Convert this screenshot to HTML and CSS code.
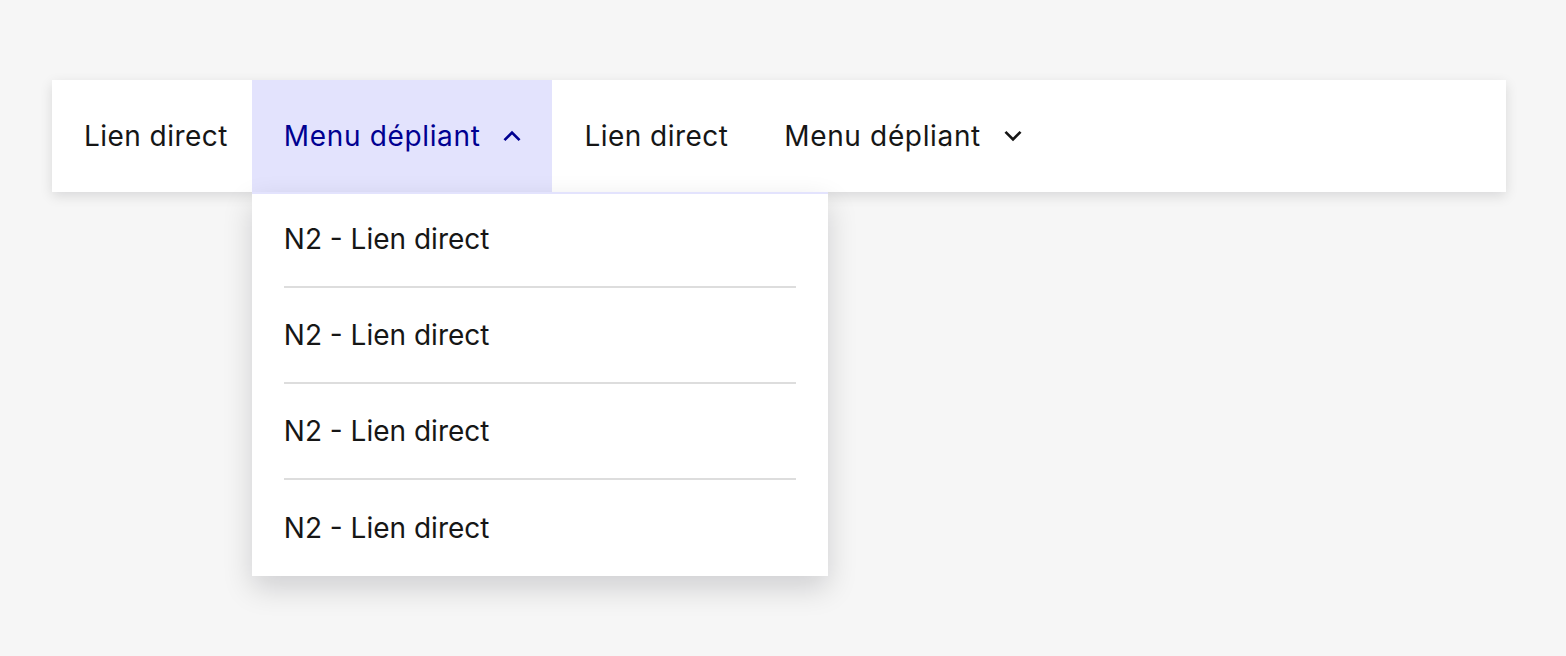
FILE: index.html
```html
<!DOCTYPE html>
<html lang="fr">
<head>
<meta charset="utf-8">
<title>Navigation</title>
<link rel="stylesheet" href="styles.css">
</head>
<body>
<div class="page">
  <nav class="nav">
    <div class="nav-list">
      <a class="nav-link" href="#">Lien direct</a>
      <div class="nav-item">
        <button class="nav-btn nav-btn--active" type="button">
          <span class="nav-btn__label">Menu dépliant</span>
          <svg class="chev" viewBox="0 0 24 24" width="32" height="32" aria-hidden="true"><path d="M12 10.828l-4.95 4.95-1.414-1.414L12 8l6.364 6.364-1.414 1.414z"/></svg>
        </button>
        <div class="menu">
          <a class="menu-link" href="#">N2 - Lien direct</a>
          <a class="menu-link" href="#">N2 - Lien direct</a>
          <a class="menu-link" href="#">N2 - Lien direct</a>
          <a class="menu-link" href="#">N2 - Lien direct</a>
        </div>
      </div>
      <a class="nav-link" href="#">Lien direct</a>
      <button class="nav-btn" type="button">
        <span class="nav-btn__label">Menu dépliant</span>
        <svg class="chev" viewBox="0 0 24 24" width="32" height="32" aria-hidden="true"><path d="M12 13.172l4.95-4.95 1.414 1.414L12 16 5.636 9.636 7.05 8.222z"/></svg>
      </button>
    </div>
  </nav>
</div>
</body>
</html>
```
FILE: styles.css
```css
* { box-sizing: border-box; }
html, body { margin: 0; padding: 0; }
body {
  background: #f6f6f6;
  font-family: "Inter", "Noto Sans", sans-serif;
  color: #161616;
  min-height: 656px;
}
.page {
  padding: 80px 60px 0 52px;
  min-height: 656px;
}
.nav {
  position: relative;
  z-index: 1;
  background: #fff;
  box-shadow: 0 4px 12px 0 rgba(0, 0, 18, 0.12);
}
.nav-list {
  display: flex;
  height: 112px;
}
.nav-item {
  position: relative;
}
.nav-link,
.nav-btn {
  display: flex;
  align-items: center;
  height: 112px;
  padding: 0 24px 0 32px;
  font-family: inherit;
  font-size: 28px;
  color: #161616;
  text-decoration: none;
  background: transparent;
  border: 0;
  cursor: pointer;
}
.nav-link {
  letter-spacing: 0.45px;
}
.nav-btn__label {
  letter-spacing: 0.65px;
}
.nav-btn .chev {
  margin-left: 16px;
  fill: currentColor;
}
.nav-btn--active {
  background: #e3e3fd;
  color: #000091;
}
.menu {
  position: absolute;
  top: 112px;
  left: 0;
  width: 576px;
  background: #fff;
  padding: 0 32px;
  box-shadow: inset 0 2px 0 0 #e3e3fd, 0 12px 28px 0 rgba(0, 0, 18, 0.16);
  z-index: 2;
}
.menu-link {
  display: flex;
  align-items: center;
  height: 96px;
  font-size: 28px;
  color: #161616;
  text-decoration: none;
  border-bottom: 2px solid #dddddd;
}
.menu-link:last-child {
  border-bottom: 0;
}
```
